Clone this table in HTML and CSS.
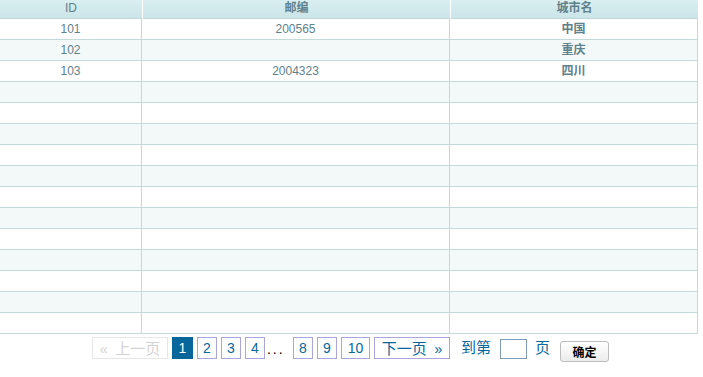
FILE: index.html
```html
<!DOCTYPE html>
<html lang="zh-CN">
<head>
<meta charset="utf-8">
<title>城市列表</title>
<link rel="stylesheet" href="styles.css">
</head>
<body>
<div class="wrap">
  <div class="grid">
    <div class="row head">
      <div class="cell">ID</div>
      <div class="cell zh">邮编</div>
      <div class="cell zh">城市名</div>
    </div>
    <div class="row"><div class="cell">101</div><div class="cell">200565</div><div class="cell zh">中国</div></div>
    <div class="row alt"><div class="cell">102</div><div class="cell"></div><div class="cell zh">重庆</div></div>
    <div class="row"><div class="cell">103</div><div class="cell">2004323</div><div class="cell zh">四川</div></div>
    <div class="row alt"><div class="cell"></div><div class="cell"></div><div class="cell"></div></div>
    <div class="row"><div class="cell"></div><div class="cell"></div><div class="cell"></div></div>
    <div class="row alt"><div class="cell"></div><div class="cell"></div><div class="cell"></div></div>
    <div class="row"><div class="cell"></div><div class="cell"></div><div class="cell"></div></div>
    <div class="row alt"><div class="cell"></div><div class="cell"></div><div class="cell"></div></div>
    <div class="row"><div class="cell"></div><div class="cell"></div><div class="cell"></div></div>
    <div class="row alt"><div class="cell"></div><div class="cell"></div><div class="cell"></div></div>
    <div class="row"><div class="cell"></div><div class="cell"></div><div class="cell"></div></div>
    <div class="row alt"><div class="cell"></div><div class="cell"></div><div class="cell"></div></div>
    <div class="row"><div class="cell"></div><div class="cell"></div><div class="cell"></div></div>
    <div class="row alt"><div class="cell"></div><div class="cell"></div><div class="cell"></div></div>
    <div class="row"><div class="cell"></div><div class="cell"></div><div class="cell"></div></div>
  </div>
  <div class="pager">
    <span class="pg off">«&nbsp; <span class="zh">上一页</span></span>
    <span class="pg cur">1</span>
    <span class="pg">2</span>
    <span class="pg">3</span>
    <span class="pg">4</span>
    <span class="dots">...</span>
    <span class="pg">8</span>
    <span class="pg">9</span>
    <span class="pg wide">10</span>
    <span class="pg nx"><span class="zh">下一页</span> &nbsp;»</span>
    <span class="lbl zh first">到第</span>
    <input class="num" type="text">
    <span class="lbl zh page">页</span>
    <button class="go" type="button">确定</button>
  </div>
</div>
</body>
</html>
```
FILE: styles.css
```css
html, body {
  margin: 0;
  padding: 0;
  background: #fff;
}
.wrap {
  width: 698px;
}
.grid {
  font-family: "Liberation Sans", "Noto Sans CJK SC", sans-serif;
  font-size: 12px;
  color: #5f818c;
}
.row {
  display: grid;
  grid-template-columns: 142px 308px 248px;
  height: 21px;
}
.row .cell {
  box-sizing: border-box;
  border-right: 1px solid #c3dad8;
  border-bottom: 1px solid #c3dad8;
  text-align: center;
  line-height: 20px;
  height: 21px;
  overflow: hidden;
}
.row .cell.zh {
  font-weight: bold;
}
.row.alt .cell {
  background: #f3f9f9;
}
.row.head {
  height: 19px;
  background: linear-gradient(#d9eff1, #cae4e7);
}
.row.head .cell {
  height: 19px;
  line-height: 17px;
  border-right: 0;
  border-bottom: 1px solid #bed8da;
}
.row.head .cell + .cell {
  border-left: 1px solid #ffffff;
}
.pager {
  display: flex;
  justify-content: center;
  align-items: flex-start;
  gap: 4px;
  margin-top: 3px;
  padding-left: 3px;
  font-family: "Liberation Sans", "Noto Sans CJK SC", sans-serif;
  font-size: 14px;
  color: #07679b;
}
.pager .zh {
  font-family: "Noto Sans CJK SC", sans-serif;
  font-size: 15px;
}
.pg {
  box-sizing: border-box;
  min-width: 20px;
  height: 22px;
  line-height: 20px;
  border: 1px solid #aba5dc;
  padding: 0 4px;
  text-align: center;
  white-space: nowrap;
}
.pg.cur {
  min-width: 21px;
  background: #07679b;
  border-color: #07679b;
  color: #fff;
}
.pg.wide {
  min-width: 29px;
}
.pg.off {
  width: 76px;
  border-color: #e6e6e6;
  color: #d3d3d3;
}
.pg.nx {
  width: 76px;
}
.dots {
  width: 22px;
  color: #000;
  letter-spacing: 2px;
  line-height: 24px;
  margin-left: -2px;
}
.lbl {
  line-height: 20px;
  margin-left: 4px;
}
.lbl.first {
  margin-left: 7px;
}
.num {
  box-sizing: border-box;
  width: 27px;
  height: 20px;
  margin: 2px 0 0 5px;
  border: 1px solid #7f9db9;
  padding: 0;
  background: #fff;
}
.go {
  box-sizing: border-box;
  width: 49px;
  height: 21px;
  margin: 4px 0 0 6px;
  padding: 0;
  border: 1px solid #bdbdbd;
  border-radius: 3px;
  background: linear-gradient(#ffffff, #ececec);
  font-family: "Noto Sans CJK SC", sans-serif;
  font-size: 12px;
  font-weight: bold;
  color: #000;
  line-height: 19px;
}
```
